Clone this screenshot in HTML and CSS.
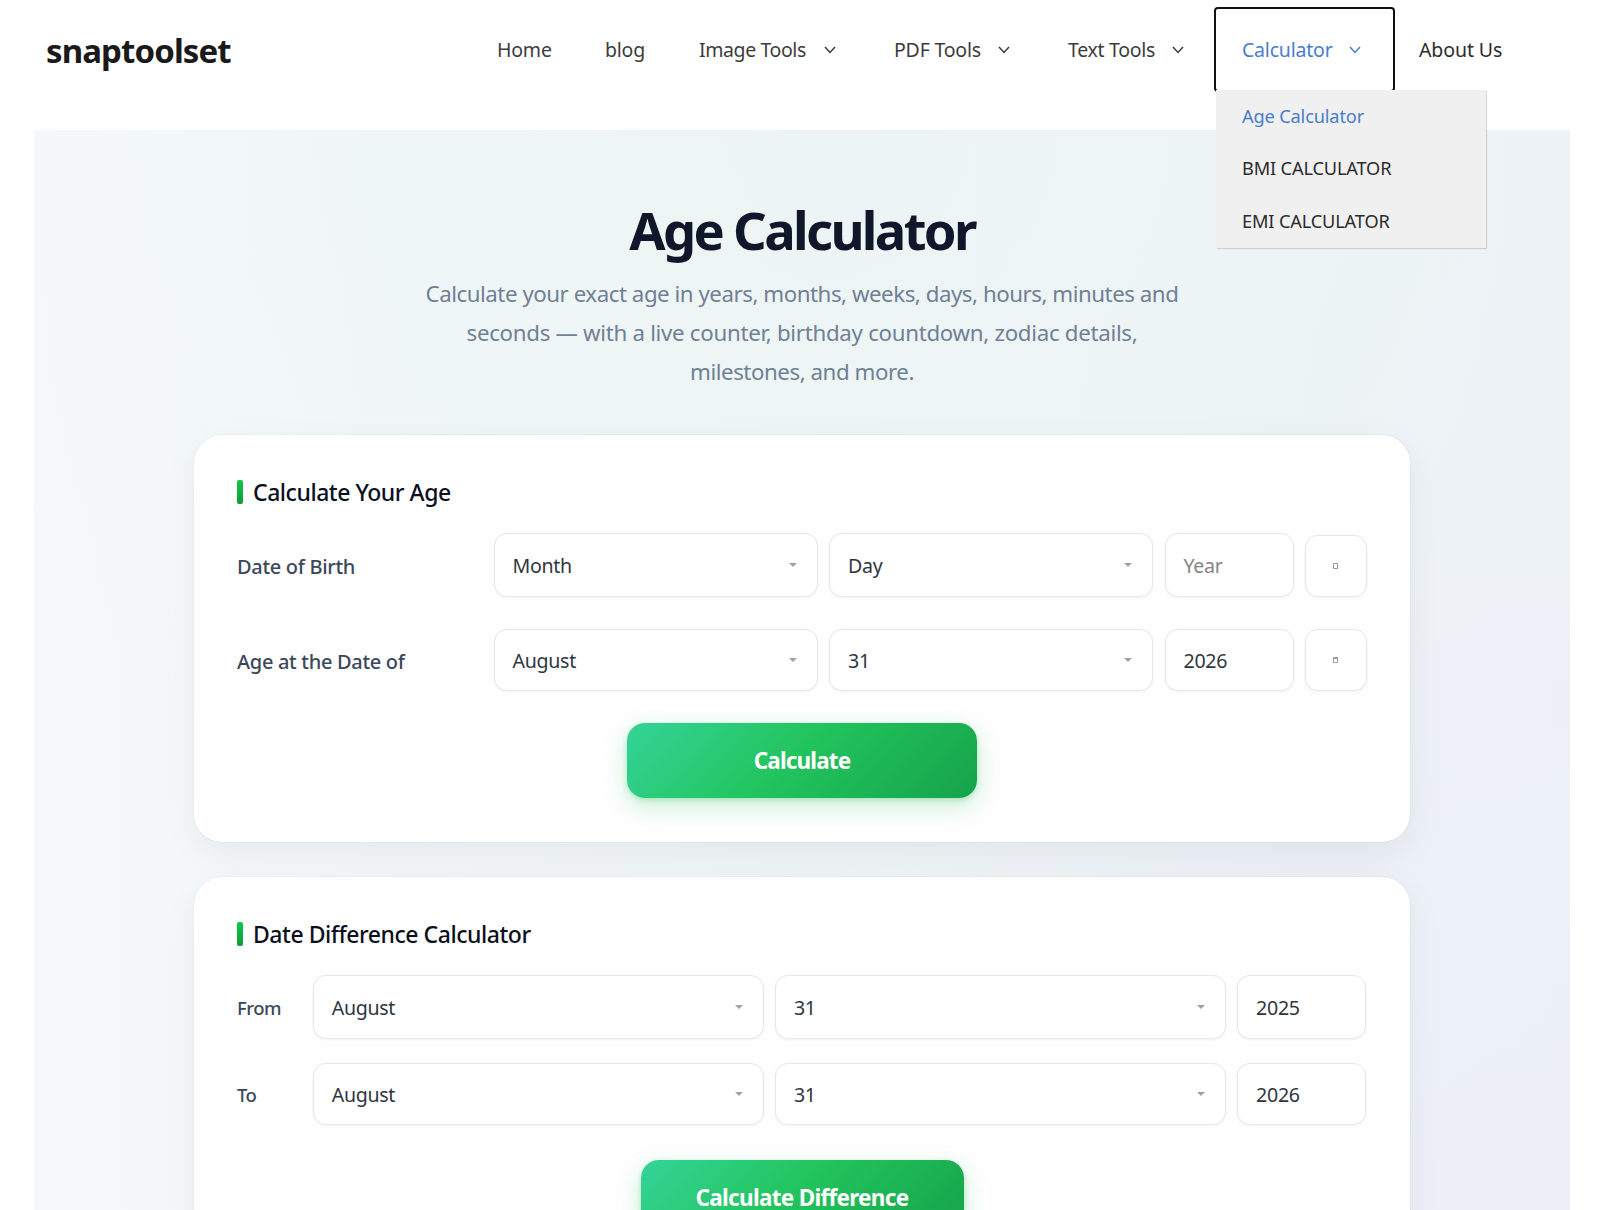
FILE: index.html
```html
<!DOCTYPE html>
<html lang="en">
<head>
<meta charset="utf-8">
<title>Age Calculator</title>
<link rel="stylesheet" href="styles.css">
</head>
<body>
<header class="site-header">
  <a class="logo">snaptoolset</a>
  <nav class="nav">
    <a class="nav-item home">Home</a>
    <a class="nav-item blog">blog</a>
    <a class="nav-item image">Image Tools <svg class="chev" viewBox="0 0 12 8"><path d="M1 1l5 5.5L11 1"/></svg></a>
    <a class="nav-item pdf">PDF Tools <svg class="chev" viewBox="0 0 12 8"><path d="M1 1l5 5.5L11 1"/></svg></a>
    <a class="nav-item text">Text Tools <svg class="chev" viewBox="0 0 12 8"><path d="M1 1l5 5.5L11 1"/></svg></a>
    <div class="nav-item calc">Calculator <svg class="chev" viewBox="0 0 12 8"><path d="M1 1l5 5.5L11 1"/></svg>
      <div class="menu">
        <a class="menu-item current">Age Calculator</a>
        <a class="menu-item caps">BMI CALCULATOR</a>
        <a class="menu-item caps">EMI CALCULATOR</a>
      </div>
    </div>
    <a class="nav-item about">About Us</a>
  </nav>
</header>
<main class="page">
  <h1 class="title">Age Calculator</h1>
  <p class="lead"><span class="l1">Calculate your exact age in years, months, weeks, days, hours, minutes and</span><br><span class="l2">seconds — with a live counter, birthday countdown, zodiac details,</span><br><span class="l3">milestones, and more.</span></p>

  <section class="card age-card">
    <h2 class="card-title">Calculate Your Age</h2>
    <div class="row age-row first">
      <span class="label">Date of Birth</span>
      <div class="field select">Month<svg class="arrow" viewBox="0 0 8 4"><path d="M0 0h8L4 4z"/></svg></div>
      <div class="field select">Day<svg class="arrow" viewBox="0 0 8 4"><path d="M0 0h8L4 4z"/></svg></div>
      <div class="field hint">Year</div>
      <div class="field picker"><svg class="glyph" viewBox="0 0 5 6"><path d="M.5 .5h4v5h-4z"/></svg></div>
    </div>
    <div class="row age-row second">
      <span class="label">Age at the Date of</span>
      <div class="field select">August<svg class="arrow" viewBox="0 0 8 4"><path d="M0 0h8L4 4z"/></svg></div>
      <div class="field select">31<svg class="arrow" viewBox="0 0 8 4"><path d="M0 0h8L4 4z"/></svg></div>
      <div class="field">2026</div>
      <div class="field picker"><svg class="glyph" viewBox="0 0 5 6"><path d="M.5 .5h4v5h-4zM.5 1.5h4"/></svg></div>
    </div>
    <button class="btn">Calculate</button>
  </section>

  <section class="card diff-card">
    <h2 class="card-title">Date Difference Calculator</h2>
    <div class="row diff-row from">
      <span class="label small">From</span>
      <div class="field select">August<svg class="arrow" viewBox="0 0 8 4"><path d="M0 0h8L4 4z"/></svg></div>
      <div class="field select">31<svg class="arrow" viewBox="0 0 8 4"><path d="M0 0h8L4 4z"/></svg></div>
      <div class="field">2025</div>
    </div>
    <div class="row diff-row to">
      <span class="label small">To</span>
      <div class="field select">August<svg class="arrow" viewBox="0 0 8 4"><path d="M0 0h8L4 4z"/></svg></div>
      <div class="field select">31<svg class="arrow" viewBox="0 0 8 4"><path d="M0 0h8L4 4z"/></svg></div>
      <div class="field">2026</div>
    </div>
    <button class="btn wide">Calculate Difference</button>
  </section>
</main>
</body>
</html>
```
FILE: styles.css
```css
* { box-sizing: border-box; }
body {
  margin: 0;
  height: 1210px;
  overflow: hidden;
  background: #fff;
  font-family: "Noto Sans", "Open Sans", sans-serif;
  font-size: 20px;
  color: #222;
}
.site-header {
  display: flex;
  justify-content: space-between;
  height: 130px;
  padding: 9px 70px 0 46px;
}
.logo {
  height: 82px;
  line-height: 84px;
  font-size: 33px;
  font-weight: 700;
  letter-spacing: -.9px;
  color: #1a1a1a;
}
.nav {
  display: flex;
  height: 81px;
  font-size: 19.5px;
  letter-spacing: -.2px;
}
.nav-item {
  display: flex;
  align-items: center;
  padding-left: 26px;
  color: #3c3c3c;
  white-space: nowrap;
}
.home { width: 108px; }
.blog { width: 94px; }
.image { width: 195px; letter-spacing: -.4px; }
.pdf { width: 174px; }
.text { width: 174px; letter-spacing: -.3px; }
.calc {
  position: relative;
  width: 177px;
  color: #4a7dcb;
  outline: 2px solid #101010;
  border-radius: 2px;
}
.about { width: 137px; color: #2c2c2c; letter-spacing: -.1px; }
.chev {
  width: 12px;
  height: 8px;
  margin-left: auto;
  margin-right: 32px;
  fill: none;
  stroke: currentColor;
  stroke-width: 1.5;
}
.menu {
  position: absolute;
  left: 0;
  top: 81px;
  z-index: 2;
  width: 270px;
  height: 158px;
  background: #f0f0f0;
  box-shadow: 1px 1px 1px rgba(0, 0, 0, .14);
  letter-spacing: -.15px;
}
.menu-item {
  display: block;
  height: 52.3px;
  padding-left: 26px;
  line-height: 53px;
  font-size: 18.2px;
  color: #2c2c2c;
}
.menu-item.current { color: #4a7dcb; }
.page {
  display: flex;
  flex-direction: column;
  align-items: center;
  width: 1536px;
  height: 1080px;
  overflow: hidden;
  margin-left: 34px;
  padding-top: 63px;
  background:
    radial-gradient(900px 800px at 50% 0%, rgba(234, 245, 243, .75), rgba(234, 245, 243, 0)),
    radial-gradient(800px 800px at 100% 100%, rgba(236, 239, 249, .9), rgba(236, 239, 249, 0)),
    linear-gradient(90deg, #f6f9fb 0%, #f0f5f7 50%, #edf2f6 100%);
}
.title {
  flex: none;
  margin: 0;
  height: 73px;
  line-height: 74px;
  font-size: 52.5px;
  font-weight: 700;
  letter-spacing: -2.65px;
  color: #0f172a;
}
.lead {
  flex: none;
  margin: 8px 0 0;
  line-height: 39px;
  font-size: 22.3px;
  text-align: center;
  white-space: nowrap;
  color: #708096;
}
.l1 { letter-spacing: -.47px; }
.l2 { letter-spacing: -.3px; }
.l3 { letter-spacing: -.45px; }
.card {
  flex: none;
  width: 1216px;
  padding: 44px 43px 0;
  background: #fefefe;
  border-radius: 28px;
  box-shadow: 0 12px 36px rgba(15, 23, 42, .06), 0 0 2px rgba(15, 23, 42, .08);
}
.age-card { height: 407px; margin-top: 44px; }
.diff-card { height: 460px; margin-top: 35px; }
.card-title {
  display: flex;
  align-items: center;
  gap: 10px;
  height: 26px;
  margin: 0;
  font-size: 23px;
  font-weight: 500;
  letter-spacing: -.46px;
  color: #0b1020;
  white-space: nowrap;
}
.card-title::before {
  content: "";
  width: 6px;
  height: 24px;
  border-radius: 2px;
  background: linear-gradient(#0cc94a, #129a3a);
}
.row { display: grid; gap: 11.5px; }
.age-row { grid-template-columns: 245px 324px 324px 129px 61.5px; }
.age-row.first { height: 64px; margin-top: 28px; }
.age-row.second { height: 62px; margin-top: 32px; }
.diff-row { grid-template-columns: 64.5px 451px 451px 129px; column-gap: 11.2px; }
.diff-row.from { height: 64px; margin-top: 28px; }
.diff-row.to { height: 62px; margin-top: 24px; }
.label {
  align-self: center;
  padding-top: 2px;
  font-weight: 500;
  letter-spacing: -.31px;
  color: #3b485b;
  white-space: nowrap;
}
.label.small { padding-top: 0; font-size: 18.5px; letter-spacing: -.5px; }
.field {
  display: flex;
  align-items: center;
  justify-content: space-between;
  padding: 0 20px 0 18px;
  border: 1.5px solid #e5e8ec;
  border-radius: 13px;
  background: #fff;
  box-shadow: 0 1px 3px rgba(15, 23, 42, .05);
  font-size: 19.6px;
  letter-spacing: -.3px;
  color: #303640;
}
.hint { color: #858585; }
.arrow { width: 8px; height: 4px; fill: #9aa1b0; }
.picker { justify-content: center; padding: 0; }
.first .picker { margin-top: 2px; }
.glyph { width: 5px; height: 6px; fill: none; stroke: #999; }
.btn {
  display: block;
  width: 350px;
  height: 75px;
  margin: 32px auto 0;
  padding: 1px 0 0;
  border: 0;
  border-radius: 18px;
  background: linear-gradient(135deg, #34d399 0%, #22c55e 45%, #16a34a 100%);
  box-shadow: 0 8px 22px rgba(34, 197, 94, .25), 0 2px 5px rgba(34, 197, 94, .25);
  font: 700 22.5px/74px "Noto Sans", sans-serif;
  letter-spacing: -.85px;
  color: #fff;
}
.btn.wide { width: 323px; margin-top: 35px; padding: 0; letter-spacing: -.7px; }
```
